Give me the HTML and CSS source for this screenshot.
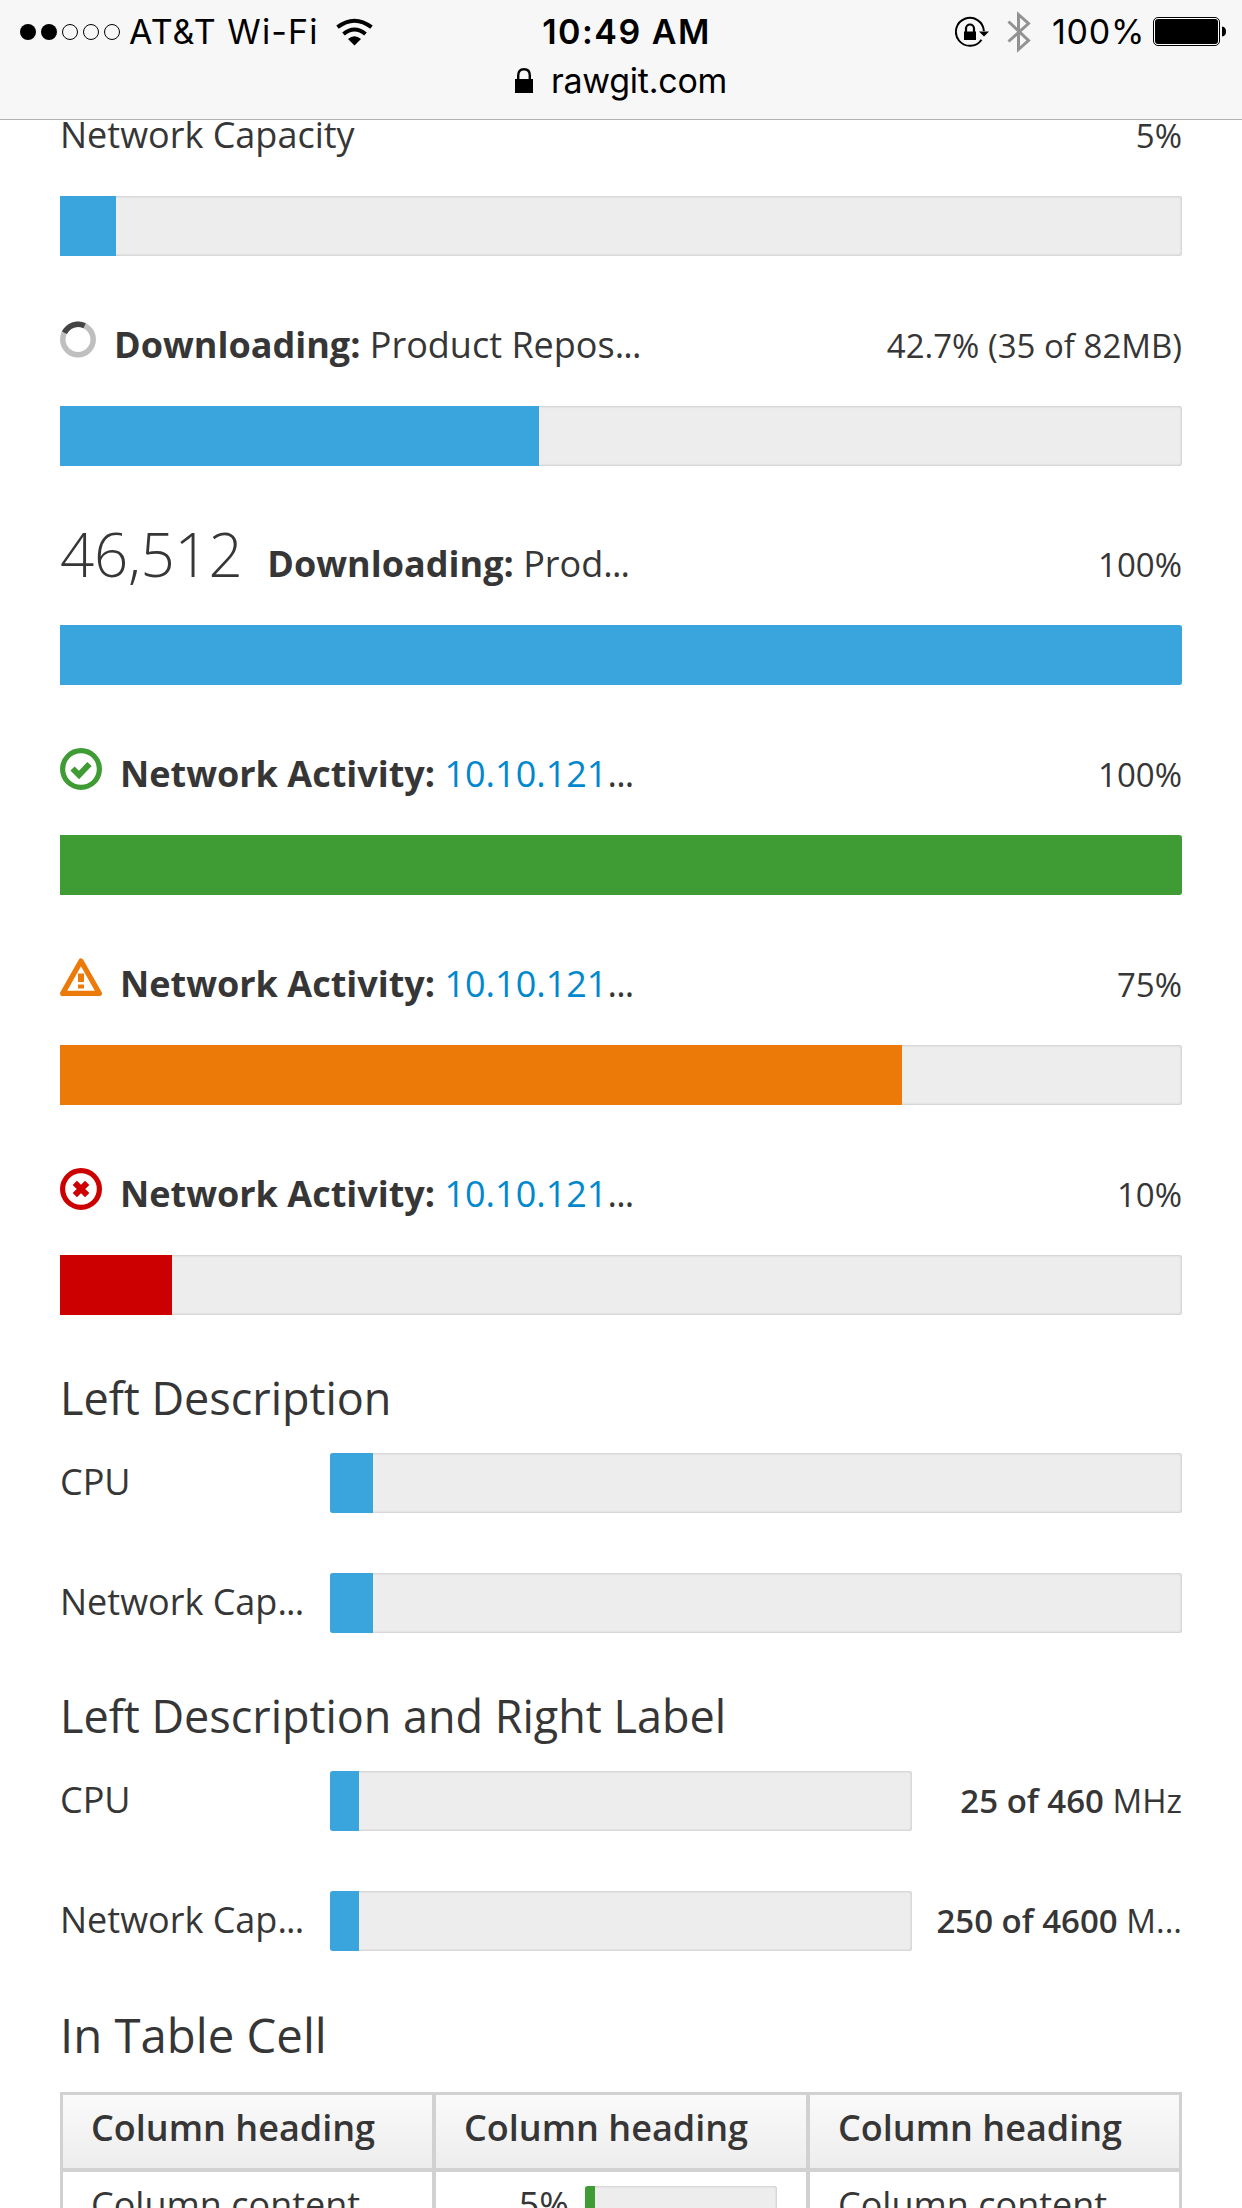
FILE: index.html
```html
<!DOCTYPE html>
<html lang="en">
<head>
<meta charset="utf-8">
<title>Progress bars</title>
<link rel="stylesheet" href="styles.css">
</head>
<body>
<header class="browser-bar">
  <div class="status">
    <div class="status-left">
      <svg class="signal" width="104" height="18" viewBox="0 0 104 18"><circle cx="9" cy="9" r="8"/><circle cx="30" cy="9" r="8"/><g fill="none" stroke="#000"><circle cx="51" cy="9" r="7.5"/><circle cx="72" cy="9" r="7.5"/><circle cx="93" cy="9" r="7.5"/></g></svg>
      <span class="carrier">AT&amp;T Wi-Fi</span>
      <svg class="wifi" width="37" height="28" viewBox="0 0 37 28"><g fill="none" stroke="#000" stroke-width="4"><path d="M1.5 9.2Q18.500-3.800 35.500 9.200"/><path d="M7.500 16Q18.500 6.900 29.500 16"/></g><path d="M12 21Q18.500 15.500 25 21L18.500 27.500Z"/></svg>
    </div>
    <div class="clock">10:49 AM</div>
    <div class="status-right">
      <svg class="rotation" width="34" height="32" viewBox="0 0 34 32"><path d="M26.500 23.700A14 14 0 1 1 28.900 15" fill="none" stroke="#000" stroke-width="2"/><path d="M24 15.500H34L29 20.500Z"/><path d="M9 15.500h12v8.500H9z"/><path d="M11 16v-3.500a4 4 0 0 1 8 0V16" fill="none" stroke="#000" stroke-width="2.200"/></svg>
      <svg class="bluetooth" width="24" height="42" viewBox="0 0 24 42"><path d="M1.500 10.500L21.500 29.500L11.500 38.500V3.500L21.500 12.500L1.500 30.500" fill="none" stroke="#929292" stroke-width="3"/></svg>
      <span class="charge">100%</span>
      <svg class="battery" width="74" height="30" viewBox="0 0 74 30"><rect x=".5" y=".5" width="66" height="28" rx="4.500" fill="#fff" stroke="#000"/><rect x="2" y="2" width="63" height="25" rx="3"/><path d="M69 9.500Q73 10 73 14.500T69 19.500Z"/></svg>
    </div>
  </div>
  <div class="address">
    <svg width="18" height="26" viewBox="0 0 18 26"><path d="M0 11h18v14H0z"/><path d="M3.200 12V7.500Q3.200 1.300 9 1.300T14.800 7.500V12" fill="none" stroke="#000" stroke-width="2.400"/></svg>
    <span>rawgit.com</span>
  </div>
</header>

<main class="page">
  <section>
    <div class="description"><span>Network Capacity</span><span class="value">5%</span></div>
    <div class="progress square"><div class="fill" style="width:5%"></div></div>

    <div class="description">
      <svg class="spinner" width="36" height="37" viewBox="0 0 36 37"><circle cx="18" cy="18.500" r="15.200" fill="none" stroke="#bfbfbf" stroke-width="5.500"/><path d="M4.500 11.800A15.200 15.200 0 0 1 24.600 4.700" fill="none" stroke="#444" stroke-width="5.500"/></svg>
      <span><b>Downloading:</b> Product Repos<span class="dots">...</span></span><span class="value">42.7% (35 of 82MB)</span>
    </div>
    <div class="progress square"><div class="fill" style="width:42.7%"></div></div>

    <div class="description with-count">
      <span class="count">46,512</span>
      <span><b>Downloading:</b> Prod<span class="dots">...</span></span><span class="value">100%</span>
    </div>
    <div class="progress square"><div class="fill" style="width:100%"></div></div>

    <div class="description">
      <svg class="state" width="42" height="42" viewBox="0 0 42 42"><circle cx="21" cy="21" r="18.400" fill="none" stroke="#3f9c35" stroke-width="5.200"/><path d="M12.500 20.500L19 27L29.500 16" fill="none" stroke="#3f9c35" stroke-width="6"/></svg>
      <span><b>Network Activity:</b> <a>10.10.121</a><span class="dots">...</span></span><span class="value">100%</span>
    </div>
    <div class="progress square"><div class="fill success" style="width:100%"></div></div>

    <div class="description">
      <svg class="state" width="42" height="42" viewBox="0 0 42 42"><path d="M21 3L39.300 35.400H2.700Z" fill="none" stroke="#ec7a08" stroke-width="5.200" stroke-linejoin="round"/><path d="M18 15.500h6v8.500h-6zM18 26.500h6v4h-6z" fill="#ec7a08"/></svg>
      <span><b>Network Activity:</b> <a>10.10.121</a><span class="dots">...</span></span><span class="value">75%</span>
    </div>
    <div class="progress square"><div class="fill warning" style="width:75%"></div></div>

    <div class="description">
      <svg class="state" width="42" height="42" viewBox="0 0 42 42"><circle cx="21" cy="21" r="18.400" fill="none" stroke="#c00" stroke-width="5.200"/><path d="M14.800 14.800L27.200 27.200M27.200 14.800L14.800 27.200" fill="none" stroke="#c00" stroke-width="6"/></svg>
      <span><b>Network Activity:</b> <a>10.10.121</a><span class="dots">...</span></span><span class="value">10%</span>
    </div>
    <div class="progress square"><div class="fill danger" style="width:10%"></div></div>
  </section>

  <section>
    <h3>Left Description</h3>
    <div class="rows">
      <div class="row"><span class="name">CPU</span><div class="progress"><div class="fill" style="width:5%"></div></div></div>
      <div class="row"><span class="name">Network Cap<span class="dots">...</span></span><div class="progress"><div class="fill" style="width:5%"></div></div></div>
    </div>
  </section>

  <section>
    <h3>Left Description and Right Label</h3>
    <div class="rows labelled">
      <div class="row"><span class="name">CPU</span><div class="progress"><div class="fill" style="width:5%"></div></div><span class="label"><strong>25 of 460</strong> MHz</span></div>
      <div class="row"><span class="name">Network Cap<span class="dots">...</span></span><div class="progress"><div class="fill" style="width:5%"></div></div><span class="label"><strong>250 of 4600</strong> M...</span></div>
    </div>
  </section>

  <section>
    <h2>In Table Cell</h2>
    <div class="table">
      <div class="th">Column heading</div><div class="th">Column heading</div><div class="th">Column heading</div>
      <div class="td">Column content</div>
      <div class="td cell-progress"><span>5%</span><div class="progress"><div class="fill success" style="width:5%"></div></div></div>
      <div class="td">Column content</div>
    </div>
  </section>
</main>
</body>
</html>
```
FILE: styles.css
```css
* { box-sizing: border-box; }
html, body { height: 2208px; overflow: hidden; }
body {
  margin: 0;
  background: #fff;
  color: #363636;
  font: 36px/54px "Open Sans", sans-serif;
}
svg { display: block; flex: none; }
span { white-space: nowrap; }
a { color: #0088ce; }
.dots { letter-spacing: -.8px; }

/* Browser bar, laid over the scrolled page */
.browser-bar {
  position: absolute;
  top: 0;
  left: 0;
  width: 1242px;
  height: 120px;
  background: #f7f7f7;
  border-bottom: 1px solid #b2b2b2;
  color: #000;
  font-family: Inter, sans-serif;
  font-size: 34px;
  z-index: 1;
}
.status {
  display: grid;
  grid-template-columns: 1fr auto 1fr;
  height: 61px;
  padding: 0 15px 0 19px;
  line-height: 63px;
}
.status-left, .status-right { display: flex; align-items: center; }
.status-right { justify-content: flex-end; }
.carrier { margin-left: 6px; letter-spacing: 1.1px; }
.wifi { margin-left: 17px; }
.clock { padding-left: 7px; font-weight: 600; letter-spacing: 1.5px; }
.rotation { margin-right: 18px; }
.bluetooth { margin-right: 21px; }
.charge { margin-right: 8px; letter-spacing: .7px; }
.address {
  display: flex;
  justify-content: center;
  align-items: center;
  gap: 18px;
  height: 40px;
  line-height: 40px;
  letter-spacing: -.25px;
}

.page { padding: 46px 60px 0; }

/* Description above a bar */
.description {
  display: flex;
  align-items: baseline;
  height: 150px;
  padding-top: 62px;
}
.with-count { height: 159px; padding-top: 61px; }
.spinner, .state { align-self: flex-start; margin: 1px 18px 0 0; }
.spinner { margin-top: 3px; }
.count { font-size: 60px; font-weight: 300; letter-spacing: -.3px; margin-right: 25px; }
.value { margin-left: auto; font-size: 33px; }

.progress {
  height: 60px;
  overflow: hidden;
  border-radius: 3px;
  background: #ededed;
  box-shadow: inset 0 0 3px rgba(0, 0, 0, .25);
}
.square { border-radius: 0 3px 3px 0; }
.fill { height: 100%; background: #39a5dc; }
.success { background: #3f9c35; }
.warning { background: #ec7a08; }
.danger { background: #c00; }

h2, h3 { margin: 0; font-weight: 400; line-height: 50px; }
h3 { height: 138px; padding-top: 58px; font-size: 45px; letter-spacing: -.03px; }
h2 { height: 141px; padding-top: 59px; font-size: 47.3px; }

.rows { display: grid; gap: 60px; }
.row { display: grid; grid-template-columns: 270px 1fr; height: 60px; }
.labelled .row { grid-template-columns: 270px 582px 1fr; }
.name { line-height: 58px; }
.label { font-size: 33px; line-height: 60px; text-align: right; }
.label strong { font-weight: 600; }

.table {
  display: grid;
  grid-template-columns: 369px 370px 369px;
  grid-template-rows: 73px 120px;
  column-gap: 4px;
  row-gap: 4px;
  border: 3px solid #d1d1d1;
  background: #d1d1d1;
}
.th, .td { padding: 0 28px; white-space: nowrap; }
.th {
  background: linear-gradient(#fafafa, #ededed);
  font-weight: 600;
  line-height: 66px;
}
.td { background: #fff; line-height: 66px; }
.cell-progress {
  display: grid;
  grid-template-columns: 122px 192px;
  padding: 14px 0 0 27px;
}
.cell-progress span { padding-right: 16px; text-align: right; line-height: 38px; }
```
